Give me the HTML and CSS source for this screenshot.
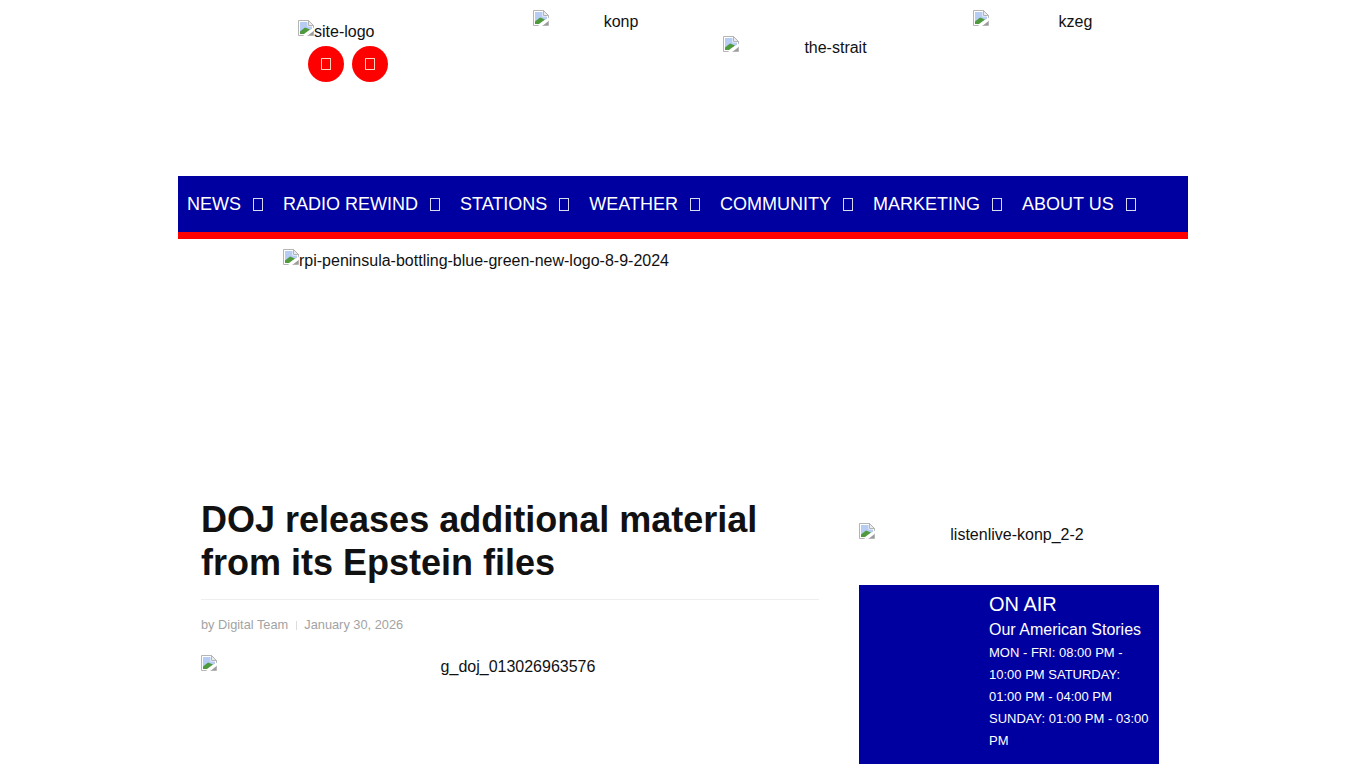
FILE: index.html
```html
<!DOCTYPE html>
<html lang="en">
<head>
<meta charset="utf-8">
<title>DOJ releases additional material from its Epstein files</title>
<link rel="stylesheet" href="styles.css">
</head>
<body>
<svg class="defs" width="0" height="0" aria-hidden="true">
  <symbol id="broken" viewBox="0 0 16 16">
    <path d="M0.5 0.5H10.5L15.5 5.5V15.5H0.5Z" fill="#fff" stroke="#b4b4b4"/>
    <path d="M10.5 0.5V5.5H15.5Z" fill="#ececec" stroke="#b4b4b4"/>
    <path d="M2 2H9.5V6.5H14V9L2 14Z" fill="#b7ccf3"/>
    <path d="M2 14V11.5L7 7.5L12 9.5L6 14Z" fill="#4f9a3c"/>
    <path d="M5 16L16 7.5V10.5L9 16Z" fill="#fff"/>
    <path d="M10.5 15L15 11.5V15Z" fill="#9c9c9c"/>
  </symbol>
</svg>
<div class="page">
  <header class="top">
    <div class="brand">
      <div class="pic pic-logo"><svg class="bi"><use href="#broken"/></svg><span>site-logo</span></div>
      <div class="social">
        <a class="round"><span class="tofu"></span></a>
        <a class="round"><span class="tofu"></span></a>
      </div>
    </div>
    <div class="pic st st-konp"><svg class="bi"><use href="#broken"/></svg><span class="alt">konp</span></div>
    <div class="pic st st-strait"><svg class="bi"><use href="#broken"/></svg><span class="alt">the-strait</span></div>
    <div class="pic st st-kzeg"><svg class="bi"><use href="#broken"/></svg><span class="alt">kzeg</span></div>
  </header>
  <nav class="nav">
    <a class="nav-item">NEWS<span class="tofu"></span></a>
    <a class="nav-item">RADIO REWIND<span class="tofu"></span></a>
    <a class="nav-item">STATIONS<span class="tofu"></span></a>
    <a class="nav-item">WEATHER<span class="tofu"></span></a>
    <a class="nav-item">COMMUNITY<span class="tofu"></span></a>
    <a class="nav-item">MARKETING<span class="tofu"></span></a>
    <a class="nav-item">ABOUT US<span class="tofu"></span></a>
  </nav>
  <div class="sponsor">
    <div class="pic"><svg class="bi"><use href="#broken"/></svg><span>rpi-peninsula-bottling-blue-green-new-logo-8-9-2024</span></div>
  </div>
  <div class="content">
    <main class="article">
      <h1 class="headline">DOJ releases additional material from its Epstein files</h1>
      <div class="meta"><span>by Digital Team</span><i class="sep"></i><span>January 30, 2026</span></div>
      <div class="pic"><svg class="bi"><use href="#broken"/></svg><span class="alt">g_doj_013026963576</span></div>
    </main>
    <aside class="side">
      <div class="pic"><svg class="bi"><use href="#broken"/></svg><span class="alt">listenlive-konp_2-2</span></div>
      <section class="onair">
        <div class="onair-body">
          <h2>ON AIR</h2>
          <h3>Our American Stories</h3>
          <p>MON - FRI: 08:00 PM - 10:00 PM SATURDAY: 01:00 PM - 04:00 PM SUNDAY: 01:00 PM - 03:00 PM</p>
        </div>
      </section>
    </aside>
  </div>
</div>
</body>
</html>
```
FILE: styles.css
```css
* { box-sizing: border-box; }
html, body { margin: 0; height: 768px; overflow: hidden; background: #fff; }
body { font-family: "Liberation Sans", Arial, sans-serif; font-size: 16px; color: #111; }
.defs { position: absolute; }
.page { width: 1010px; margin: 0 auto; }
.pic { display: flex; align-items: flex-start; line-height: 24px; }
.bi { width: 16px; height: 16px; flex: none; }
.alt { flex: 1; text-align: center; }
.top { height: 176px; display: flex; align-items: flex-start; }
.brand { width: 355px; padding: 20px 0 0 120px; }
.social { display: flex; gap: 8px; margin: 2px 0 0 10px; }
.round { width: 36px; height: 36px; border-radius: 50%; background: #f00; display: flex; align-items: center; justify-content: center; }
.round .tofu { height: 12px; border-color: rgba(255, 235, 210, .9); }
.tofu { display: inline-block; width: 10px; height: 13px; border: 1px solid rgba(255, 255, 255, .85); }
.st { margin-top: 10px; }
.st-konp { width: 160px; }
.st-strait { width: 209px; margin-left: 30px; margin-top: 36px; }
.st-kzeg { width: 189px; margin-left: 41px; }
.nav { height: 63px; background: #0000a0; border-bottom: 7px solid #f00; padding: 0 0 0 9px; display: flex; align-items: center; gap: 20px; }
.nav-item { color: #fff; font-size: 18px; line-height: 56px; display: flex; align-items: center; }
.nav-item .tofu { margin-left: 12px; }
.sponsor { height: 243px; padding: 10px 0 0 105px; }
.content { display: flex; padding: 0 0 0 23px; }
.article { width: 618px; margin-top: 16px; }
.headline { margin: 0; font-size: 36px; line-height: 43px; font-weight: 700; color: #111; padding-bottom: 15px; border-bottom: 1px solid #eee; }
.meta { display: flex; align-items: center; font-size: 12.8px; color: #a3a3a3; margin: 16px 0 21px; line-height: 18px; }
.sep { width: 1px; height: 9px; background: #ddd; margin: 0 7px 0 8px; }
.side { width: 300px; margin-left: 40px; padding-top: 41px; }
.onair { background: #0000a0; height: 179px; margin-top: 38px; padding: 7px 10px 0 130px; color: #fff; }
.onair h2 { margin: 0; font-size: 20px; font-weight: 400; line-height: 24px; }
.onair h3 { margin: 2px 0 0; font-size: 16px; font-weight: 400; line-height: 24px; }
.onair p { margin: 0; font-size: 13px; line-height: 22px; }
```
